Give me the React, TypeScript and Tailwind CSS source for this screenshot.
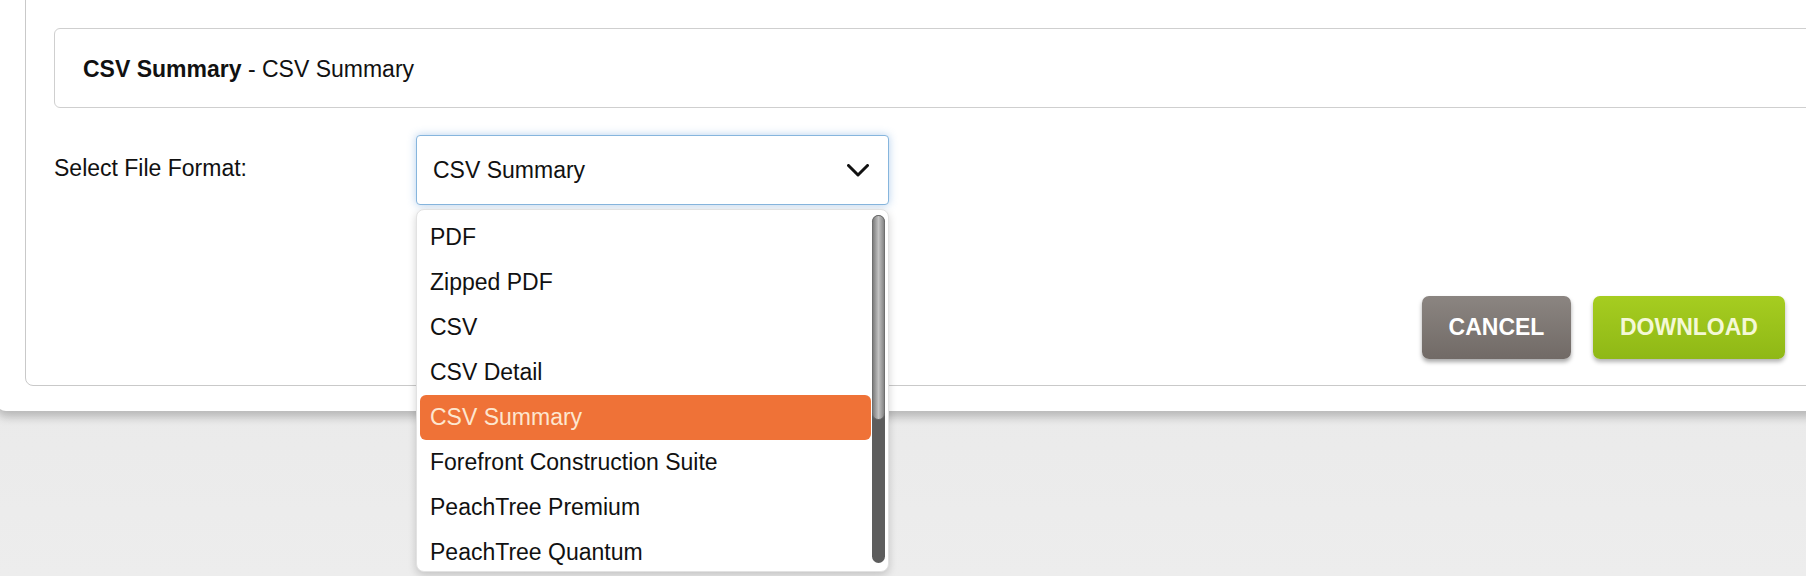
import React from "react";

const formats = [
  "PDF",
  "Zipped PDF",
  "CSV",
  "CSV Detail",
  "CSV Summary",
  "Forefront Construction Suite",
  "PeachTree Premium",
  "PeachTree Quantum",
];

const Chevron = () => (
  <svg width="22" height="13" viewBox="0 0 22 13" fill="none">
    <polyline
      points="1.5,1.5 11,11 20.5,1.5"
      stroke="#111"
      strokeWidth="3"
      strokeLinecap="round"
      strokeLinejoin="round"
    />
  </svg>
);

const FormatDropdown = ({ selected }: { selected: string }) => {
  return (
    <div className="absolute left-0 top-[74px] w-[473px] h-[363px] bg-white rounded-[8px] border border-[#e2e2e2] shadow-[0_3px_8px_rgba(0,0,0,0.18)] z-10">
      <ul className="pt-[5px] pl-[3px] pr-[17px]">
        {formats.map((f) =>
          f === selected ? (
            <li
              key={f}
              className="h-[45px] flex items-center pl-[10px] rounded-[6px] bg-[#ef7237] text-[#fde6cf]"
            >
              {f}
            </li>
          ) : (
            <li key={f} className="h-[45px] flex items-center pl-[10px] text-[#111]">
              {f}
            </li>
          )
        )}
      </ul>
      {/* Scrollbar */}
      <div className="absolute right-[3px] top-[5px] bottom-[8px] w-[13px] rounded-full bg-[#5d5d5d] overflow-hidden">
        <div className="h-[205px] rounded-full border border-[#6f6f6f] bg-[linear-gradient(to_right,#7d7d7d,#c2c2c2_50%,#858585)]"></div>
      </div>
    </div>
  );
};

const App = () => {
  return (
    <div className="w-full h-[576px] overflow-hidden bg-[linear-gradient(to_bottom,#e4e4e4,#ededed)] font-['Liberation_Sans',Arial,sans-serif] text-[23px] text-[#111]">
      {/* Outer modal */}
      <div className="-ml-[4px] -mt-[20px] w-[1860px] pl-[29px] pb-[25px] bg-white rounded-b-[10px] shadow-[0_6px_10px_rgba(0,0,0,0.22)]">
        {/* Inner panel */}
        <div className="border border-[#c9c9c9] rounded-[8px] pt-[47px] pl-[28px] pr-[70px] pb-[26px]">
          {/* Summary */}
          <div className="h-[80px] w-[1830px] flex items-center pl-[28px] pt-[2px] border border-[#cfcfcf] rounded-[6px]">
            <span className="font-bold">CSV Summary</span>
            <span>&nbsp;- CSV Summary</span>
          </div>

          {/* Format select row */}
          <div className="mt-[27px] flex items-start">
            <label className="w-[362px] pt-[16px]">Select File Format:</label>
            <div className="relative">
              <div className="w-[473px] h-[70px] flex items-center justify-between pl-[16px] pr-[19px] bg-white border border-[#86b5dd] rounded-[4px] shadow-[0_0_9px_rgba(90,150,215,0.45)]">
                <span>CSV Summary</span>
                <Chevron />
              </div>
              <FormatDropdown selected="CSV Summary" />
            </div>
          </div>

          {/* Actions */}
          <div className="mt-[91px] flex justify-end gap-[22px]">
            <button className="w-[149px] h-[63px] rounded-[7px] bg-[linear-gradient(to_bottom,#8b8581,#716a66)] text-white font-bold shadow-[0_3px_4px_rgba(0,0,0,0.35)]">
              CANCEL
            </button>
            <button className="w-[192px] h-[63px] rounded-[7px] bg-[linear-gradient(to_bottom,#a6cd20,#8fb816)] text-[#f4f8d6] font-bold shadow-[0_3px_4px_rgba(0,0,0,0.3)]">
              DOWNLOAD
            </button>
          </div>
        </div>
      </div>
    </div>
  );
};

export default App;
